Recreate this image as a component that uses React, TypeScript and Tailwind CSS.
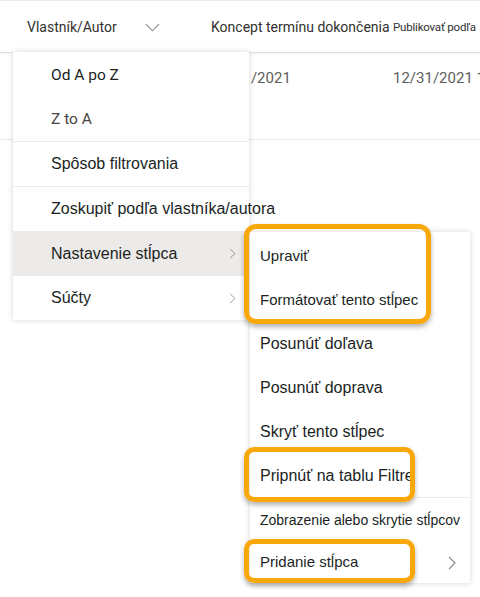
function ChevronRight({ className }: { className?: string }) {
  return (
    <svg viewBox="0 0 8 14" className={className} fill="none" stroke="#8a8886" strokeWidth="1.1">
      <path d="M1 1l6 6-6 6" />
    </svg>
  )
}

function ChevronDown({ className, color = '#8a8886' }: { className?: string; color?: string }) {
  return (
    <svg viewBox="0 0 16 9" className={className} fill="none" stroke={color} strokeWidth="1.1">
      <path d="M1 1l7 7 7-7" />
    </svg>
  )
}

export default function App() {
  const arial = "font-['Liberation_Sans',Arial,sans-serif]"

  return (
    <main className="relative h-[597px] w-[480px] overflow-hidden bg-white">
      {/* HEADER */}
      <div className="flex h-[53px] items-center border-t border-b border-t-[#edebe9] border-b-[#e1dfdd] pt-[2px] text-[14px] text-[#323130] shadow-[0_1px_3px_rgba(0,0,0,0.06)] font-['Roboto',sans-serif]">
        <div className="flex w-[211px] shrink-0 items-center pl-[27px] pr-[51px]">
          <span>Vlastník/Autor</span>
          <ChevronDown className="ml-auto h-[9px] w-[15px]" />
        </div>
        <div className="relative w-[182px] shrink-0">
          <span className="relative z-10 whitespace-nowrap">Koncept termínu dokončenia</span>
          <ChevronDown className="absolute left-[122px] top-[5px] h-[9px] w-[14px]" color="#d2d0ce" />
        </div>
        <div className="whitespace-nowrap text-[11.5px] tracking-[-0.2px]">Publikovať podľa</div>
      </div>

      {/* DATA ROW */}
      <div className="flex h-[87px] border-b border-[#edebe9] pt-[14px] text-[15px] text-[#605e5c] font-['Roboto',sans-serif]">
        <div className="w-[211px] shrink-0" />
        <div className="w-[182px] shrink-0">12/31/2021</div>
        <div className="whitespace-nowrap">12/31/2021 11:59</div>
      </div>

      {/* MAIN MENU */}
      <div className={`absolute left-[13px] top-[52px] w-[236px] bg-white pt-[2px] text-[16px] text-[#201f1e] shadow-[0_0_6px_rgba(0,0,0,0.16)] ${arial}`}>
        <div className="flex h-[44px] items-center pl-[38px] text-[15.5px] font-['Roboto',sans-serif]">Od A po Z</div>
        <div className="flex h-[43px] items-center pl-[38px] text-[15.5px] text-[#484644] font-['Roboto',sans-serif]">Z to A</div>
        <div className="h-px bg-[#edebe9]" />
        <div className="flex h-[44px] items-center pl-[38px]">Spôsob filtrovania</div>
        <div className="h-px bg-[#edebe9]" />
        <div className="flex h-[44px] items-center whitespace-nowrap pl-[38px]">Zoskupiť podľa vlastníka/autora</div>
        <div className="flex h-[45px] items-center bg-[#edebe9] pl-[38px] pr-[13px]">
          <span>Nastavenie stĺpca</span>
          <ChevronRight className="ml-auto h-[11px] w-[7px]" />
        </div>
        <div className="flex h-[44px] items-center pl-[38px] pr-[13px]">
          <span>Súčty</span>
          <ChevronRight className="ml-auto h-[11px] w-[7px]" />
        </div>
      </div>

      {/* SUBMENU */}
      <div className={`absolute left-[250px] top-[232px] w-[220px] bg-white pt-[2px] text-[16px] text-[#201f1e] shadow-[0_0_6px_rgba(0,0,0,0.16)] ${arial}`}>
        <div className="flex h-[44px] items-center pl-[10px] text-[15px]">Upraviť</div>
        <div className="flex h-[44px] items-center pl-[10px] text-[15px]">Formátovať tento stĺpec</div>
        <div className="flex h-[44px] items-center pl-[10px]">Posunúť doľava</div>
        <div className="flex h-[44px] items-center pl-[10px]">Posunúť doprava</div>
        <div className="flex h-[44px] items-center pl-[10px]">Skryť tento stĺpec</div>
        <div className="flex h-[43px] items-center pl-[10px]">Pripnúť na tablu Filtre</div>
        <div className="h-px bg-[#edebe9]" />
        <div className="flex h-[44px] items-center whitespace-nowrap pl-[10px] text-[14px]">Zobrazenie alebo skrytie stĺpcov</div>
        <div className="flex h-[41px] items-center pl-[10px] pr-[14px] text-[15px]">
          <span>Pridanie stĺpca</span>
          <ChevronRight className="ml-auto h-[14px] w-[8px]" />
        </div>
      </div>

      {/* CALLOUTS */}
      <div className="absolute left-[244px] top-[224px] h-[100px] w-[187px] rounded-[12px] border-[5px] border-[#f8a80a] shadow-[0_3px_5px_rgba(0,0,0,0.3)]" />
      <div className="absolute left-[244px] top-[447px] h-[55px] w-[171px] rounded-[10px] border-[5px] border-[#f8a80a] shadow-[0_3px_5px_rgba(0,0,0,0.3)]" />
      <div className="absolute left-[244px] top-[539px] h-[44px] w-[171px] rounded-[10px] border-[5px] border-[#f8a80a] shadow-[0_3px_5px_rgba(0,0,0,0.3)]" />
    </main>
  )
}
